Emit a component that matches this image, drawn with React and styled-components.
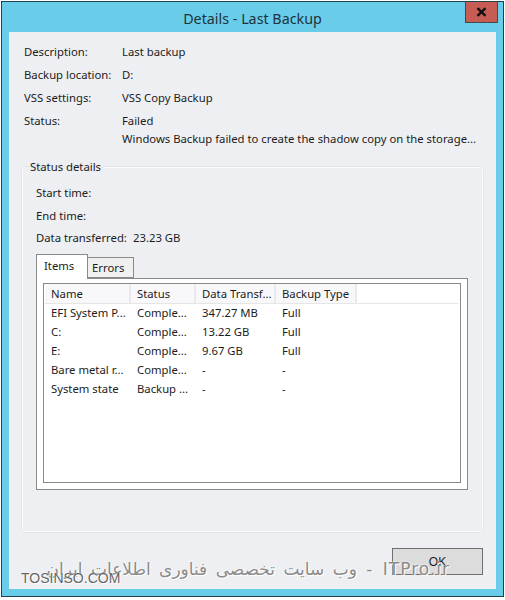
import React from "react";
import styled, { createGlobalStyle } from "styled-components";

const Global = createGlobalStyle`
  html, body { margin: 0; padding: 0; background: #fff; }
  body { width: 505px; height: 600px; overflow: hidden; font-family: "Noto Sans", "Open Sans", sans-serif; font-size: 11.3px; color: #1c1c1c; }
`;

const Win = styled.div`
  position: relative; box-sizing: border-box; width: 503px; height: 596px; margin: 1px 0 0 1px;
  border: 1px solid #22404c; background: #69cdea; display: flex; flex-direction: column;
`;
const TitleBar = styled.div`
  position: relative; height: 30px; flex: none; display: flex; align-items: center; justify-content: center;
  font-size: 14.3px; color: #20323c; padding-top: 2px; box-sizing: border-box;
`;
const CloseBtn = styled.div`
  position: absolute; top: 0; right: 5px; width: 33px; height: 21px; box-sizing: border-box;
  background: #c75c55; border: 1px solid #3f4a50; border-top: 0;
  display: flex; align-items: center; justify-content: center;
  svg { display: block; }
`;
const Body = styled.div`
  flex: 1; margin: 0 7px 7px 7px; background: #eeeff2; display: flex; flex-direction: column;
  padding: 10px 5px 0 15px; box-sizing: border-box;
`;
const Row = styled.div`
  display: flex; height: ${p => p.$h || 23}px; line-height: 20px;
`;
const Label = styled.div`width: ${p => p.$w || 98}px; flex: none;`;
const Value = styled.div`white-space: nowrap;`;
const Group = styled.fieldset`
  margin: 11px 0 0 -2px; padding: 0 14px 0 13px; width: 461px; height: 372px; box-sizing: border-box;
  border: 1px solid #fafafa; border-radius: 3px; display: flex; flex-direction: column;
  position: relative; box-shadow: 0 0 0 0.5px #dcdcdc;
  legend { margin-left: -11px; padding: 0 3px 0 5px; line-height: 14px; }
`;
const GroupBody = styled.div`padding-top: 9px; flex: none;`;
const Tabs = styled.div`display: flex; align-items: flex-end; height: 24px; margin-top: 8px; position: relative; z-index: 1;`;
const Tab = styled.div`
  box-sizing: border-box; border: 1px solid #8a8a8a;
  ${p => p.$active ? `
    width: 52px; height: 25px; background: #fff; border-bottom: 0; padding: 3px 0 0 7px; margin-bottom: -1px;
  ` : `
    width: 46px; height: 21px; background: #f0f0f0; border-left: 0; padding: 2px 0 0 4px;
  `}
`;
const Panel = styled.div`
  box-sizing: border-box; width: 432px; height: 212px; border: 1px solid #8a8a8a; background: #fff; padding: 4px 6px 6px 6px;
`;
const List = styled.div`
  box-sizing: border-box; height: 200px; border: 1px solid #8a8a8a; background: #fff; padding: 0 1px;
`;
const HeaderRow = styled.div`
  display: flex; height: 19px; margin-right: 1px; background: #fff; border-bottom: 1px solid #e6e6e6; margin-bottom: -1px;
`;
const HeadCell = styled.div`
  box-sizing: border-box; width: ${p => p.$w}px; padding-left: 6px; line-height: 20px;
  border-right: 2px solid #e8e8ee; background: #f8f8fb; white-space: nowrap; overflow: hidden;
`;
const DataRow = styled.div`display: flex; height: 19px; line-height: 19px;`;
const Cell = styled.div`
  box-sizing: border-box; width: ${p => p.$w}px; padding-left: 6px; white-space: nowrap;
`;
const Footer = styled.div`display: flex; justify-content: flex-end; padding: 16px 8px 0 0;`;
const Ok = styled.div`
  box-sizing: border-box; width: 91px; height: 27px; border: 1px solid #707070; background: #dcdcdc;
  display: flex; align-items: center; justify-content: center; font-family: "Liberation Sans", sans-serif; font-size: 12px;
`;
const Mark = styled.div`
  position: absolute; right: 53px; top: 557px; white-space: nowrap; direction: rtl;
  font-family: "DejaVu Sans", sans-serif; font-size: 17px; color: #8b8b8b; letter-spacing: 1px; word-spacing: 3px;
  text-shadow: 0 0 2px #fff, 1px 1px 0 #fff;
`;
const MarkSite = styled.div`
  position: absolute; left: 19px; top: 568px; white-space: nowrap;
  font-family: "Liberation Sans", sans-serif; font-size: 14px; color: #666;
  text-shadow: 0 0 1px #fff, 1px 1px 0 #fff;
`;

const cols = [86, 65, 80, 81];
const head = ["Name", "Status", "Data Transf...", "Backup Type"];
const rows = [
  ["EFI System P...", "Comple...", "347.27 MB", "Full"],
  ["C:", "Comple...", "13.22 GB", "Full"],
  ["E:", "Comple...", "9.67 GB", "Full"],
  ["Bare metal r...", "Comple...", "-", "-"],
  ["System state", "Backup ...", "-", "-"],
];

export default function App() {
  return (
    <>
      <Global />
      <Win>
        <TitleBar>
          Details - Last Backup
          <CloseBtn>
            <svg width="11" height="10" viewBox="0 0 11 10"><path d="M1.5 1.2 9.5 8.8M9.5 1.2 1.5 8.8" stroke="#111" strokeWidth="2.4" /></svg>
          </CloseBtn>
        </TitleBar>
        <Body>
          <Row><Label>Description:</Label><Value>Last backup</Value></Row>
          <Row><Label>Backup location:</Label><Value>D:</Value></Row>
          <Row><Label>VSS settings:</Label><Value>VSS Copy Backup</Value></Row>
          <Row $h={18}><Label>Status:</Label><Value>Failed</Value></Row>
          <Row $h={20}><Label /><Value>Windows Backup failed to create the shadow copy on the storage...</Value></Row>
          <Group>
            <legend>Status details</legend>
            <GroupBody>
              <Row><Label $w={97}>Start time:</Label></Row>
              <Row $h={22}><Label $w={97}>End time:</Label></Row>
              <Row $h={18}><Label $w={97}>Data transferred:</Label><Value>23.23 GB</Value></Row>
            </GroupBody>
            <Tabs>
              <Tab $active>Items</Tab>
              <Tab>Errors</Tab>
            </Tabs>
            <Panel>
              <List>
                <HeaderRow>
                  {head.map((h, i) => <HeadCell key={h} $w={cols[i]}>{h}</HeadCell>)}
                </HeaderRow>
                {rows.map(r => (
                  <DataRow key={r[0]}>
                    {r.map((c, i) => <Cell key={i} $w={cols[i]}>{c}</Cell>)}
                  </DataRow>
                ))}
              </List>
            </Panel>
          </Group>
          <Footer><Ok>OK</Ok></Footer>
        </Body>
        <Mark>ITPro.ir - وب سایت تخصصی فناوری اطلاعات ایران</Mark>
        <MarkSite>TOSINSO.COM</MarkSite>
      </Win>
    </>
  );
}
